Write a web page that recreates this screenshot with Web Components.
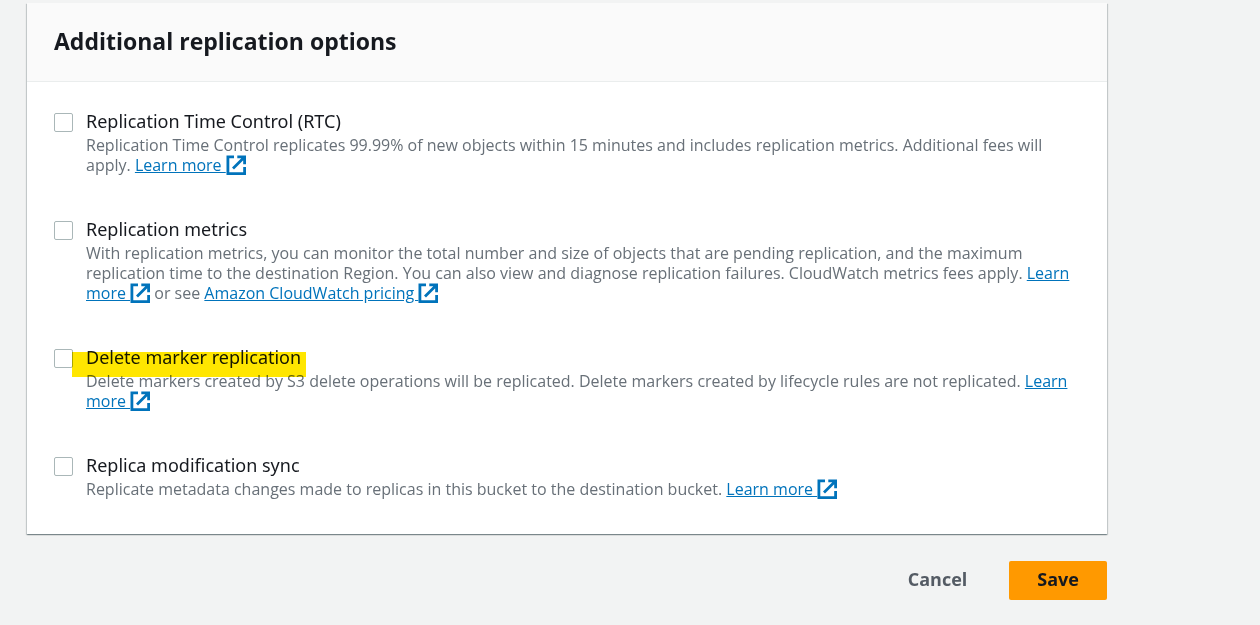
<!DOCTYPE html>
<html lang="en">
<head>
<meta charset="utf-8">
<meta name="viewport" content="width=device-width, initial-scale=1">
<title>Additional replication options</title>
<style>
  body { margin: 0; background: #f2f3f3; color: #16191f; font-family: "Open Sans", "Noto Sans", sans-serif; }
</style>
</head>
<body>
<replication-page></replication-page>

<template id="page-template">
  <style>
    :host { display: block; padding: 3px 153px 24px 27px; }
  </style>
  <option-panel heading="Additional replication options">
    <option-item label="Replication Time Control (RTC)">Replication Time Control replicates 99.99% of new objects within 15 minutes and includes replication metrics. Additional fees will apply. <external-link label="Learn more"></external-link></option-item>
    <option-item label="Replication metrics">With replication metrics, you can monitor the total number and size of objects that are pending replication, and the maximum replication time to the destination Region. You can also view and diagnose replication failures. CloudWatch metrics fees apply. <external-link label="Learn more"></external-link> or see <external-link label="Amazon CloudWatch pricing"></external-link></option-item>
    <option-item label="Delete marker replication" highlighted>Delete markers created by S3 delete operations will be replicated. Delete markers created by lifecycle rules are not replicated. <external-link label="Learn more"></external-link></option-item>
    <option-item label="Replica modification sync">Replicate metadata changes made to replicas in this bucket to the destination bucket. <external-link label="Learn more"></external-link></option-item>
  </option-panel>
  <form-actions></form-actions>
</template>

<template id="panel-template">
  <style>
    :host { display: block; background: #fff; box-shadow: 0 1px 1px 0 rgba(0,28,36,.3), 1px 1px 1px 0 rgba(0,28,36,.15), -1px 1px 1px 0 rgba(0,28,36,.15); }
    header { background: #fafafa; border-bottom: 1px solid #eaeded; padding: 22px 27px 24px; }
    h2 { margin: 0; font-size: 23px; line-height: 32px; font-weight: 700; }
    .items { display: flex; flex-direction: column; gap: 43px; padding: 28px 27px 35px; }
  </style>
  <header><h2></h2></header>
  <div class="items"><slot></slot></div>
</template>

<template id="item-template">
  <style>
    :host { display: grid; grid-template-columns: 19px 1fr; column-gap: 13px; }
    input { appearance: none; box-sizing: border-box; width: 19px; height: 19px; margin: 3px 0 0; border: 1px solid #aab7b8; border-radius: 2px; background: #fff; }
    input:checked { background: #0073bb; border-color: #0073bb; }
    label { position: relative; justify-self: start; margin-bottom: 3px; font-family: "Noto Sans", sans-serif; font-size: 18px; line-height: 22px; }
    :host([highlighted]) label::after { content: ""; position: absolute; inset: 6px -5px -9px -14px; background: #ffe600; mix-blend-mode: multiply; pointer-events: none; }
    p { grid-column: 2; margin: 0; color: #687078; font-size: 16px; line-height: 20px; }
  </style>
  <input type="checkbox" id="option" aria-describedby="description">
  <label for="option"></label>
  <p id="description"><slot></slot></p>
</template>

<template id="link-template">
  <style>
    :host { display: inline; }
    a { color: #0073bb; text-decoration: underline; text-underline-offset: 1px; }
    svg { display: inline-block; width: 20px; height: 20px; vertical-align: top; fill: none; stroke: currentColor; stroke-width: 2.8; }
  </style>
  <a href="#"><svg viewBox="0 0 20 20" aria-hidden="true"><path d="M8 1.9H1.9v16.7h16.7v-6.6M11.3 1.9h7.3v7.3M18 2.5L7 13.5"/></svg></a>
</template>

<template id="actions-template">
  <style>
    :host { display: flex; justify-content: flex-end; gap: 14px; padding-top: 27px; }
    button { border: 0; border-radius: 2px; padding: 5px 28px 8px; font: 700 18px/26px "Open Sans", "Noto Sans", sans-serif; cursor: pointer; }
    .cancel { background: transparent; color: #545b64; }
    .save { background: #ff9900; color: #16191f; }
  </style>
  <button type="button" class="cancel">Cancel</button>
  <button type="submit" class="save">Save</button>
</template>

<script>
  class TemplateElement extends HTMLElement {
    constructor() {
      super();
      const template = document.getElementById(this.constructor.template);
      this.attachShadow({ mode: "open" }).append(template.content.cloneNode(true));
    }
  }
  class ExternalLink extends TemplateElement {
    static template = "link-template";
    connectedCallback() {
      const link = this.shadowRoot.querySelector("a");
      // The non-breaking space keeps the underline running up to the icon.
      link.replaceChildren(this.getAttribute("label") + "\u00a0", link.querySelector("svg"));
    }
  }
  class FormActions extends TemplateElement { static template = "actions-template"; }
  class OptionItem extends TemplateElement {
    static template = "item-template";
    connectedCallback() { this.shadowRoot.querySelector("label").textContent = this.getAttribute("label"); }
  }
  class OptionPanel extends TemplateElement {
    static template = "panel-template";
    connectedCallback() { this.shadowRoot.querySelector("h2").textContent = this.getAttribute("heading"); }
  }
  class ReplicationPage extends TemplateElement { static template = "page-template"; }

  customElements.define("external-link", ExternalLink);
  customElements.define("form-actions", FormActions);
  customElements.define("option-item", OptionItem);
  customElements.define("option-panel", OptionPanel);
  customElements.define("replication-page", ReplicationPage);
</script>
</body>
</html>
